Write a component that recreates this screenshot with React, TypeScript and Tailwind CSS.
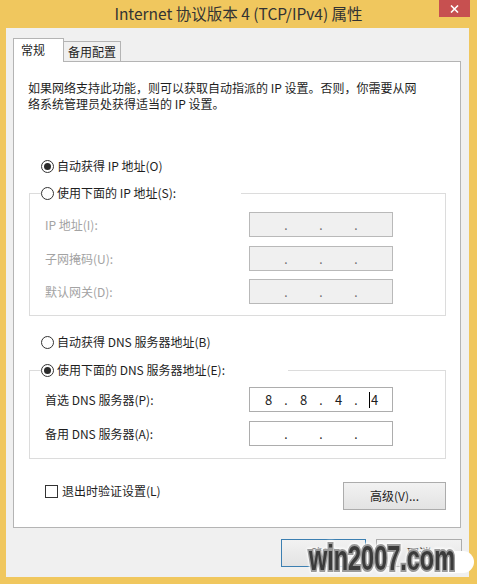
import React from "react";

function Radio({ checked, label }: { checked?: boolean; label: string }) {
  return (
    <span className="flex h-[16px] items-center gap-[3px] whitespace-nowrap">
      <span className="flex h-[13px] w-[13px] items-center justify-center rounded-full border border-[#333] bg-white">
        {checked && <span className="h-[7px] w-[7px] rounded-full bg-[#2b2b2b]" />}
      </span>
      <span className="leading-[16px]">{label}</span>
    </span>
  );
}

function IpField({ values, disabled, cursor }: { values?: string[]; disabled?: boolean; cursor?: boolean }) {
  const v = values ?? ["", "", "", ""];
  return (
    <div
      className={`flex h-[25px] w-[144px] items-center justify-center border ${
        disabled ? "border-[#b9b9b9] bg-[#f0f0f0] text-[#6d6d6d]" : "border-[#adadad] bg-white text-[#1e1e1e]"
      }`}
    >
      {v.map((n, i) => (
        <React.Fragment key={i}>
          <span className="flex h-[16px] w-[29px] items-center justify-center text-[13px] leading-[16px]">
            {cursor && i === 3 && <span className="mr-[1px] inline-block h-[16px] w-px bg-black" />}
            {n}
          </span>
          {i < 3 && <span className="h-[16px] w-[6px] text-center text-[12px] leading-[16px]">.</span>}
        </React.Fragment>
      ))}
    </div>
  );
}

function Row({ label, disabled, children, className }: { label: string; disabled?: boolean; children: React.ReactNode; className?: string }) {
  return (
    <div className={`flex h-[25px] items-center ${className ?? ""}`}>
      <span className={`flex-1 leading-[16px] ${disabled ? "text-[#a3a3a3]" : ""}`}>{label}</span>
      {children}
    </div>
  );
}

export default function App() {
  return (
    <div className="relative flex h-[584px] w-[477px] flex-col overflow-hidden bg-[#f0c75e] font-['Noto_Sans_CJK_SC',sans-serif] text-[12px] leading-[16px] text-[#1e1e1e]">
      {/* Title bar */}
      <div className="flex h-[28px] items-start">
        <div className="w-[38px]" />
        <div className="flex-1 pt-[4px] text-center text-[15.5px] leading-[18px] text-[#333]">
          Internet 协议版本 4 (TCP/IPv4) 属性
        </div>
        <div className="mr-[7px] flex h-[17px] w-[31px] items-center justify-center bg-[#c75050]">
          <svg width="9" height="8" viewBox="0 0 9 8">
            <path d="M1 0.5 L8 7.5 M8 0.5 L1 7.5" stroke="#fff" strokeWidth="1.6" />
          </svg>
        </div>
      </div>

      {/* Window body */}
      <div className="ml-[6px] mr-[8px] flex h-[549px] flex-col bg-[#f0f0f0]">
        {/* Tabs */}
        <div className="flex items-end pl-[7px] pt-[10px]">
          <div className="relative z-10 -mb-px flex h-[24px] w-[51px] items-start border border-b-0 border-[#b4b4b4] bg-white pl-[7px] pt-[3px]">
            常规
          </div>
          <div className="-ml-px flex h-[20px] w-[58px] items-center justify-center border border-b-0 border-[#b4b4b4] bg-[#f0f0f0]">
            备用配置
          </div>
        </div>

        {/* Tab panel */}
        <div className="mr-[8px] ml-[7px] flex h-[467px] flex-col border border-[#b4b4b4] bg-white">
          <p className="whitespace-nowrap pl-[14px] pt-[18px]">
            如果网络支持此功能，则可以获取自动指派的 IP 设置。否则，你需要从网
            <br />
            络系统管理员处获得适当的 IP 设置。
          </p>

          <div className="ml-[27px] mt-[46px]">
            <Radio checked label="自动获得 IP 地址(O)" />
          </div>

          <fieldset className="ml-[15px] mr-[14px] mt-[11px] border border-[#dcdcdc] p-0">
            <legend className="ml-[11px] w-[200px] bg-white p-0">
              <Radio label="使用下面的 IP 地址(S):" />
            </legend>
            <div className="flex flex-col pb-[11px] pl-[15px] pr-[52px] pt-[11px]">
              <Row label="IP 地址(I):" disabled>
                <IpField disabled />
              </Row>
              <Row label="子网掩码(U):" disabled className="mt-[9px]">
                <IpField disabled />
              </Row>
              <Row label="默认网关(D):" disabled className="mt-[8px]">
                <IpField disabled />
              </Row>
            </div>
          </fieldset>

          <div className="ml-[27px] mt-[18px]">
            <Radio label="自动获得 DNS 服务器地址(B)" />
          </div>

          <fieldset className="ml-[15px] mr-[14px] mt-[12px] border border-[#dcdcdc] p-0">
            <legend className="ml-[11px] w-[247px] bg-white p-0">
              <Radio checked label="使用下面的 DNS 服务器地址(E):" />
            </legend>
            <div className="flex flex-col pb-[12px] pl-[15px] pr-[52px] pt-[9px]">
              <Row label="首选 DNS 服务器(P):">
                <IpField values={["8", "8", "4", "4"]} cursor />
              </Row>
              <Row label="备用 DNS 服务器(A):" className="mt-[9px]">
                <IpField />
              </Row>
            </div>
          </fieldset>

          <div className="ml-[31px] mr-[14px] mt-[23px] flex items-start justify-between">
            <span className="mt-px flex h-[16px] items-center gap-[4px]">
              <span className="h-[13px] w-[13px] border border-[#333] bg-white" />
              <span>退出时验证设置(L)</span>
            </span>
            <button className="h-[28px] w-[103px] border border-[#acacac] bg-gradient-to-b from-[#f2f2f2] to-[#e3e3e3]">
              高级(V)...
            </button>
          </div>
        </div>

        {/* Dialog buttons */}
        <div className="mr-[7px] mt-[11px] flex justify-end gap-[10px]">
          <button className="h-[28px] w-[85px] border border-[#3c7fb1] bg-gradient-to-b from-[#f2f2f2] to-[#e3e3e3]">
            确定
          </button>
          <button className="h-[28px] w-[86px] border border-[#acacac] bg-gradient-to-b from-[#f2f2f2] to-[#e3e3e3]">
            取消
          </button>
        </div>
      </div>

      {/* Watermark overlay */}
      <div className="absolute left-[440px] top-[551px] h-[22px] w-[34px] rounded-full bg-white" />
      <span className="absolute left-[309px] top-[540px] origin-left scale-x-[0.67] whitespace-nowrap font-['Liberation_Sans',sans-serif] text-[35px] font-bold leading-none text-[#3b3b3b] [-webkit-text-stroke:4px_#9a9a9a] [paint-order:stroke_fill] [filter:drop-shadow(0_0_1.5px_#ffffff)_drop-shadow(0_0_1.5px_#ffffff)]">
        win2007.com
      </span>
    </div>
  );
}
